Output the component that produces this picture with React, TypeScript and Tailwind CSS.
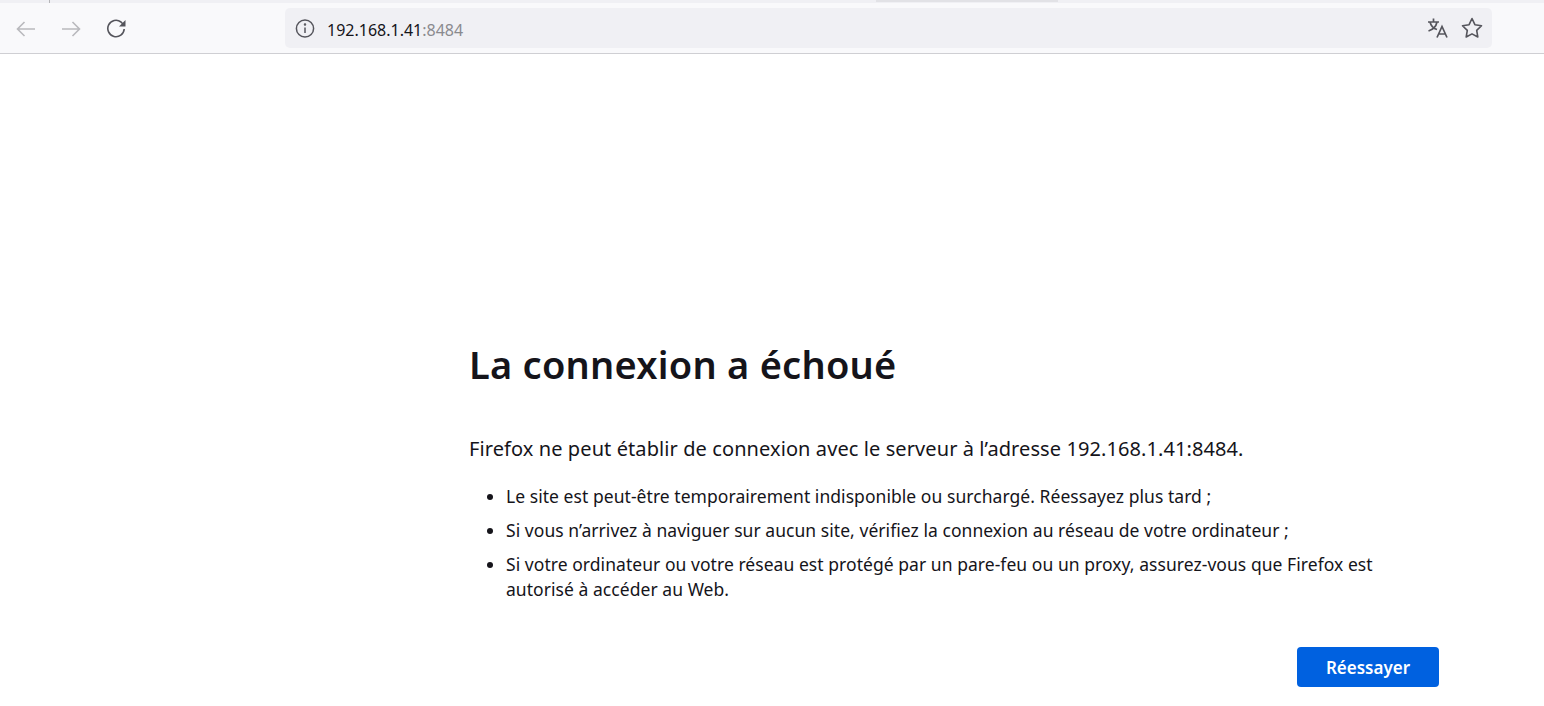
const font = "font-['Noto_Sans','Open_Sans',sans-serif]";

function Back({ flip = false }: { flip?: boolean }) {
  return (
    <svg width="20" height="20" viewBox="0 0 20 20" fill="none" stroke="#b9b9bd" strokeWidth="1.6" style={flip ? { transform: 'scaleX(-1)' } : undefined}>
      <path d="M19 11H1.5M8.5 4 1.5 11l7 7" />
    </svg>
  );
}

export default function App() {
  return (
    <div className={`h-[706px] w-[1544px] overflow-hidden bg-white ${font}`}>
      <header className="h-[54px] border-b border-[#cfcfd3] bg-[#f9f9fb]">
        <div className="relative h-[3px] bg-[#f0f0f4]">
          <div className="absolute left-[49px] top-0 h-[3px] w-px bg-[#b5b5b8]" />
          <div className="absolute left-[876px] top-0 h-[2px] w-[182px] bg-[#e2e2e6]" />
        </div>
        <div className="flex items-center pl-[16px] pt-[5px]">
          <div className="flex w-[269px] items-center gap-[25px]">
            <Back />
            <Back flip />
            <svg width="20" height="20" viewBox="0 0 20 20" fill="none">
              <path d="M18.2 11A8.2 8.2 0 1 1 15 4L17.5 6.5" stroke="#55555c" strokeWidth="1.6" />
              <path d="M19.5 2v6.5H13z" fill="#55555c" />
            </svg>
          </div>
          <div className="flex h-10 w-[1207px] items-center rounded-[5px] bg-[#f0f0f4] pl-[10px] pr-[9px]">
            <svg width="20" height="20" viewBox="0 0 20 20" fill="none" stroke="#55555c" strokeWidth="1.5">
              <circle cx="10" cy="10.5" r="8.6" />
              <path d="M10 9.5v5.5" />
              <circle cx="10" cy="6.5" r="0.5" fill="#55555c" />
            </svg>
            <span className="ml-[12px] mt-[4px] text-[16px] leading-none text-[#15141a]">
              192.168.1.41<span className="text-[#8a8a8e]">:8484</span>
            </span>
            <div className="ml-auto flex items-center gap-[13px]">
              <svg width="22" height="22" viewBox="-0.5 0 22 22" fill="none" stroke="#55555c" strokeWidth="1.7">
                <path d="M1.5 5h11M7 1.5V5M10.5 5c-.8 4-4 7.5-8.5 9M3.5 5c.9 3.7 3.6 6.5 7 7.5" />
                <path d="M10.5 20.5 15.5 9.5l5 11M12.2 17h6.6" />
              </svg>
              <svg width="22" height="22" viewBox="0 0 22 22" fill="none" stroke="#55555c" strokeWidth="1.6" strokeLinejoin="round">
                <path d="M11 1.5l2.9 6.2 6.6 1-4.8 4.7 1.1 6.6-5.8-3.1-5.8 3.1 1.1-6.6-4.8-4.7 6.6-1z" />
              </svg>
            </div>
          </div>
        </div>
      </header>
      <main className="w-[1439px] pl-[469px] pt-[285px] text-[#15141a]">
        <h1 className="text-[38px] font-semibold leading-[50px] tracking-[0.24px]">La connexion a échoué</h1>
        <p className="mt-[46px] text-[20px] leading-[28px] tracking-[0.09px]">
          Firefox ne peut établir de connexion avec le serveur à l’adresse 192.168.1.41:8484.
        </p>
        <ul className="mt-[21px] list-disc pl-[37px] text-[17.5px] leading-[25px] tracking-[0.05px]">
          <li>Le site est peut-être temporairement indisponible ou surchargé. Réessayez plus tard ;</li>
          <li className="mt-[9px]">Si vous n’arrivez à naviguer sur aucun site, vérifiez la connexion au réseau de votre ordinateur ;</li>
          <li className="mt-[9px]">Si votre ordinateur ou votre réseau est protégé par un pare-feu ou un proxy, assurez-vous que Firefox est autorisé à accéder au Web.</li>
        </ul>
        <div className="mt-[45px] flex justify-end">
          <button className="h-10 w-[142px] rounded-[4px] bg-[#0061e0] pt-[1px] text-[17px] font-semibold text-white">Réessayer</button>
        </div>
      </main>
    </div>
  );
}
